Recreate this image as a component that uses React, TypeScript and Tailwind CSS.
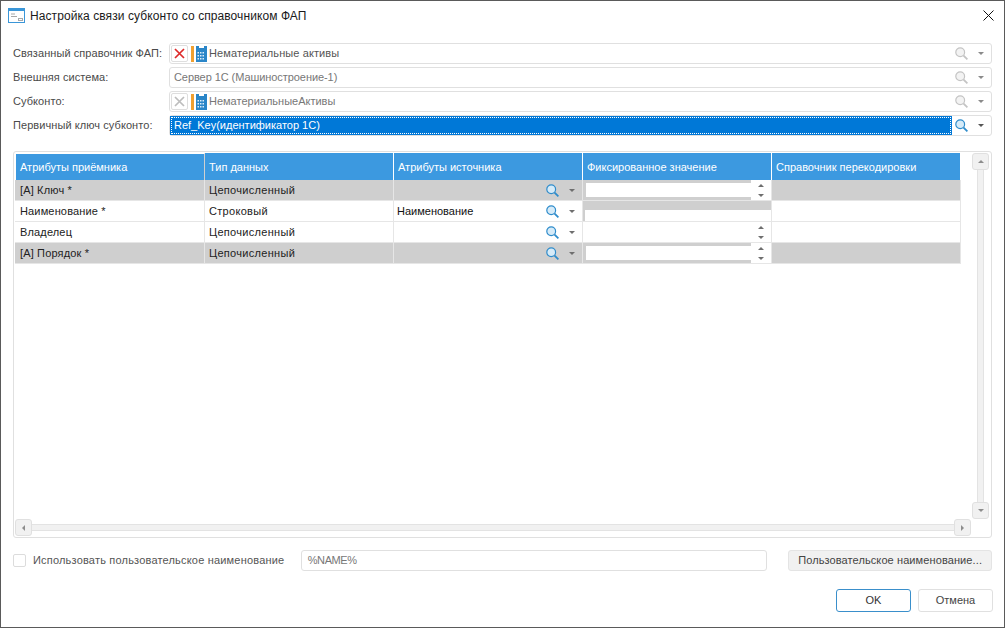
const font = "font-['Liberation_Sans',Arial,sans-serif]";

function Search({ active = true, cls = "" }: { active?: boolean; cls?: string }) {
  const stroke = active ? "#2f8ccb" : "#c4c4c4";
  const fill = active ? "#d6ebf8" : "#f3f3f3";
  return (
    <svg width="13" height="13" viewBox="0 0 13 13" className={`block shrink-0 ${cls}`}>
      <circle cx="5.2" cy="5.2" r="4.4" fill={fill} stroke={stroke} strokeWidth="1.2" />
      <path d="M8.6 8.6 L12.4 12.4" stroke={stroke} strokeWidth="1.8" />
    </svg>
  );
}

function Arrow({ dir = "down", color = "#6e6e6e" }: { dir?: "down" | "up" | "left" | "right"; color?: string }) {
  const paths = { down: "M0 0H6L3 3Z", up: "M3 0L6 3H0Z", left: "M3 0V6L0 3Z", right: "M0 0V6L3 3Z" };
  const horizontal = dir === "left" || dir === "right";
  return (
    <svg width={horizontal ? 3 : 6} height={horizontal ? 6 : 3} viewBox={horizontal ? "0 0 3 6" : "0 0 6 3"} className="block shrink-0">
      <path d={paths[dir]} fill={color} />
    </svg>
  );
}

function Directory() {
  return (
    <span className="flex items-center gap-[2px] shrink-0">
      <span className="w-[3px] h-[16px] bg-[#f0a030]" />
      <svg width="11" height="16" viewBox="0 0 11 16" className="block">
        <path d="M0 0H3V2H8V0H11V16H0Z" fill="#2a86c8" />
        <path d="M4 6h1.5v1.5H4zM6.5 6H8v1.5H6.5zM4 9h1.5v1.5H4zM6.5 9H8v1.5H6.5zM4 12h1.5v1.5H4zM6.5 12H8v1.5H6.5zM1.5 6H3v1.5H1.5zM1.5 9H3v1.5H1.5zM1.5 12H3v1.5H1.5z" fill="#dcecf8" />
      </svg>
    </span>
  );
}

function ClearButton({ active }: { active: boolean }) {
  return (
    <span className="w-[17px] h-[17px] shrink-0 rounded-[2px] border border-[#dedede] bg-white flex items-center justify-center">
      <svg width="11" height="11" viewBox="0 0 11 11" className="block">
        <path d="M1 1L10 10M10 1L1 10" stroke={active ? "#dd2a2a" : "#bdbdbd"} strokeWidth="1.7" />
      </svg>
    </span>
  );
}

function FormRow({ label, children, active = false }: { label: string; children: React.ReactNode; active?: boolean }) {
  return (
    <div className="flex h-[21px] items-center">
      <span className="w-[156px] shrink-0 text-[#4a4a4a] whitespace-nowrap tracking-[0.07px]">{label}</span>
      <div className="flex-1 h-[21px] rounded-[3px] border border-[#e0e0e0] bg-white flex items-center pl-[1px] pr-[7px]">
        <div className="flex-1 min-w-0 flex items-center h-full">{children}</div>
        <Search active={active} cls="ml-[4px]" />
        <span className="w-[16px] flex justify-end">
          <Arrow color={active ? "#555" : "#8a8a8a"} />
        </span>
      </div>
    </div>
  );
}

const cols = "grid grid-cols-[190px_189px_189px_189px_189px] w-[946px]";

function Spin({ cellGray }: { cellGray: boolean }) {
  return (
    <div className={`h-full flex items-stretch ${cellGray ? "pt-[3px] pl-[3px]" : ""}`}>
      <div className={`flex-1 ${cellGray ? "bg-white mb-[3px]" : ""}`} />
      <div className={`w-[20px] pt-[1px] flex flex-col items-center justify-center gap-[7px] bg-white ${cellGray ? "-mt-[3px]" : ""}`}>
        <Arrow dir="up" />
        <Arrow dir="down" />
      </div>
    </div>
  );
}

function Row({ name, type, gray, source, fixed }: { name: string; type: string; gray: boolean; source?: string; fixed: React.ReactNode }) {
  const bg = gray ? "bg-[#cfcfcf]" : "bg-white";
  const cell = `h-full border-r border-[#e6e6e6] ${bg}`;
  return (
    <div className={`${cols} h-[21px] border-b border-[#e6e6e6] text-[#222]`}>
      <div className={`${cell} pl-[5px] flex items-center tracking-[0.15px]`}>{name}</div>
      <div className={`${cell} pl-[4px] flex items-center tracking-[0.3px]`}>{type}</div>
      <div className={`${cell} pl-[3px] pr-[7px] pt-[1px] flex items-center`}>
        <span className="flex-1 text-[#111]">{source}</span>
        <Search cls="mr-[10px]" />
        <Arrow />
      </div>
      <div className={`${cell} overflow-hidden`}>{fixed}</div>
      <div className={cell} />
    </div>
  );
}

function ScrollButton({ dir }: { dir: "up" | "down" | "left" | "right" }) {
  return (
    <span className="w-[17px] h-[17px] shrink-0 rounded-[3px] border border-[#e0e0e0] bg-[#f1f1f1] flex items-center justify-center">
      <Arrow dir={dir} color="#8d8d8d" />
    </span>
  );
}

export default function App() {
  return (
    <div className={`${font} w-[1005px] h-[628px] border border-[#5a5a5a] bg-white text-[11px] flex flex-col overflow-hidden`}>
      <div className="h-[29px] shrink-0 flex items-center pl-[7px] pr-[10px]">
        <svg width="17" height="15" viewBox="0 0 17 15" className="block mr-[5px]">
          <rect x="0.5" y="0.5" width="16" height="14" fill="#fff" stroke="#3a96d8" />
          <rect x="0" y="0" width="17" height="3" fill="#3a96d8" />
          <path d="M3 6H7M3 8.5H9" stroke="#a8a8a8" />
          <rect x="10.5" y="10.5" width="4" height="2" fill="#fff" stroke="#a8a8a8" />
        </svg>
        <span className="flex-1 text-[12px] tracking-[0.08px] text-[#1a1a1a] whitespace-nowrap">Настройка связи субконто со справочником ФАП</span>
        <svg width="11" height="11" viewBox="0 0 11 11" className="block">
          <path d="M0.5 0.5L10.5 10.5M10.5 0.5L0.5 10.5" stroke="#111" strokeWidth="1" />
        </svg>
      </div>

      <div className="flex flex-col gap-[3px] px-[12px] pt-[13px]">
        <FormRow label="Связанный справочник ФАП:">
          <ClearButton active />
          <span className="ml-[3px]"><Directory /></span>
          <span className="ml-[2px] text-[#555] tracking-[0.1px]">Нематериальные активы</span>
        </FormRow>
        <FormRow label="Внешняя система:">
          <span className="ml-[3px] text-[#777] tracking-[-0.07px]">Сервер 1С (Машиностроение-1)</span>
        </FormRow>
        <FormRow label="Субконто:">
          <ClearButton active={false} />
          <span className="ml-[3px]"><Directory /></span>
          <span className="ml-[2px] text-[#777]">НематериальныеАктивы</span>
        </FormRow>
        <FormRow label="Первичный ключ субконто:" active>
          <div className="flex-1 h-[17px] bg-[#0078d7] border border-dotted border-white outline outline-1 outline-[#0078d7] text-white flex items-center pl-[2px]">
            Ref_Key(идентификатор 1С)
          </div>
        </FormRow>
      </div>

      <div className="mx-[12px] mt-[15px] h-[387px] rounded-[3px] border border-[#e0e0e0] p-[1px] flex flex-col">
        <div className="flex flex-1 min-h-0">
          <div className="flex-1 min-w-0">
            <div className={`${cols} h-[27px] text-white`}>
              {["Атрибуты приёмника", "Тип данных", "Атрибуты источника", "Фиксированное значение", "Справочник перекодировки"].map((h, i) => (
                <div key={h} className={`bg-[#3c99e0] border-r border-white flex items-center pl-[4px] pt-[1px] ${i === 0 ? "border-l border-t border-[#d0d0d0] border-r-[#d0d0d0]" : ""}`}>
                  {h}
                </div>
              ))}
            </div>
            <Row name="[A] Ключ *" type="Цепочисленный" gray source="" fixed={<Spin cellGray />} />
            <Row
              name="Наименование *"
              type="Строковый"
              gray={false}
              source="Наименование"
              fixed={
                <div className="h-full flex flex-col">
                  <div className="h-[9px] bg-[#cfcfcf]" />
                  <div className="flex-1 border-l-[2px] border-[#cfcfcf] bg-white" />
                </div>
              }
            />
            <Row name="Владелец" type="Цепочисленный" gray={false} source="" fixed={<Spin cellGray={false} />} />
            <Row name="[A] Порядок *" type="Цепочисленный" gray source="" fixed={<Spin cellGray />} />
          </div>
          <div className="w-[17px] shrink-0 flex flex-col items-center mr-[1px]">
            <ScrollButton dir="up" />
            <div className="flex-1 w-[7px] bg-[#f1f1f1] border-x border-[#e3e3e3]" />
            <ScrollButton dir="down" />
          </div>
        </div>
        <div className="h-[17px] shrink-0 flex items-center mr-[19px]">
          <ScrollButton dir="left" />
          <div className="flex-1 h-[7px] bg-[#f1f1f1] border-y border-[#e3e3e3]" />
          <ScrollButton dir="right" />
        </div>
      </div>

      <div className="flex items-center h-[21px] mt-[12px] px-[12px]">
        <span className="w-[13px] h-[13px] rounded-[2px] border border-[#dcdcdc] bg-white shrink-0" />
        <span className="ml-[7px] w-[268px] text-[#555] whitespace-nowrap tracking-[0.19px]">Использовать пользовательское наименование</span>
        <div className="w-[467px] h-[21px] rounded-[3px] border border-[#e0e0e0] flex items-center pl-[6px] text-[#777] tracking-[-0.4px]">%NAME%</div>
        <button className="ml-[21px] w-[204px] h-[21px] rounded-[3px] border border-[#e4e4e4] bg-[#f1f1f1] text-[#444] tracking-[0.1px]">Пользовательское наименование...</button>
      </div>

      <div className="flex justify-end gap-[7px] px-[11px] mt-[18px]">
        <button className="w-[75px] h-[23px] rounded-[3px] border border-[#3a8fcb] bg-white text-[#333]">OK</button>
        <button className="w-[75px] h-[23px] rounded-[3px] border border-[#e0e0e0] bg-white text-[#444]">Отмена</button>
      </div>
    </div>
  );
}
